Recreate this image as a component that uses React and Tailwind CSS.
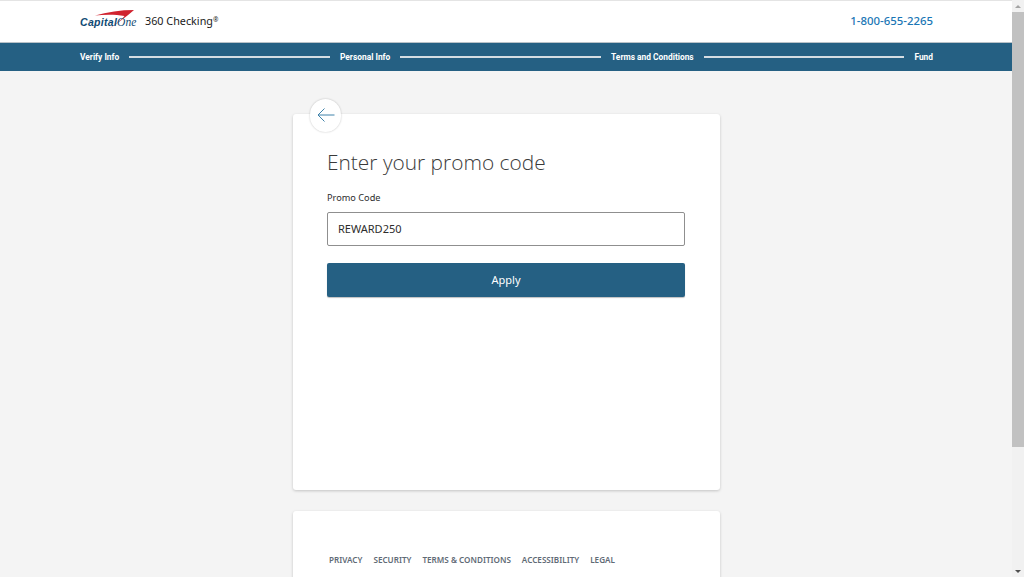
import { Fragment } from "react";

const font = { fontFamily: '"Noto Sans", "Open Sans", sans-serif' };

const steps = ["Verify Info", "Personal Info", "Terms and Conditions", "Fund"];
const footerLinks = ["PRIVACY", "SECURITY", "TERMS & CONDITIONS", "ACCESSIBILITY", "LEGAL"];

function Logo() {
	return (
		<div className="relative w-[56px] h-[22px]">
			<svg className="absolute left-0 top-[-1px]" width="56" height="22" viewBox="0 0 56 22">
				<path d="M15 6.5C27 3 41 1 54 1 47 7 38 14 29 20 36 14.5 42 10.5 44.5 7 36 5.5 25 5.5 15 6.5Z" fill="#d0232f" />
			</svg>
			<span className="absolute left-0 top-[6px] text-[10.5px] leading-[12px] font-bold italic text-[#0f4a73] whitespace-nowrap tracking-[0.3px] font-['Liberation_Sans']">
				Capital<span className="font-normal tracking-normal font-['Liberation_Serif'] text-[11.5px]">One</span>
			</span>
		</div>
	);
}

function ProgressBar() {
	return (
		<div className="h-[28px] shrink-0 bg-[#256083] flex items-center pl-[80px] pr-[79px] text-white text-[8.4px] font-bold font-['Roboto']">
			{steps.map((step, i) => (
				<Fragment key={step}>
					<span className="whitespace-nowrap">{step}</span>
					{i < steps.length - 1 && <div className="flex-1 h-[2px] bg-[#d5dde3] mx-[10px]"></div>}
				</Fragment>
			))}
		</div>
	);
}

function Scrollbar() {
	return (
		<div className="w-[12px] h-full bg-[#f1f1f1] flex flex-col items-center">
			<div className="h-[12px] shrink-0 flex items-center justify-center">
				<div className="w-0 h-0 border-x-[3px] border-x-transparent border-b-[3px] border-b-[#a3a3a3]"></div>
			</div>
			<div className="w-full h-[435px] shrink-0 bg-[#c1c1c1]"></div>
			<div className="flex-1"></div>
			<div className="h-[12px] shrink-0 flex items-center justify-center">
				<div className="w-0 h-0 border-x-[3px] border-x-transparent border-t-[3px] border-t-[#505050]"></div>
			</div>
		</div>
	);
}

export default function App() {
	return (
		<div style={font} className="h-[577px] w-[1024px] flex overflow-hidden bg-[#f4f4f4]">
			<div className="w-[1012px] h-full flex flex-col overflow-hidden">
				{/* Header */}
				<div className="h-[43px] shrink-0 bg-white border-t border-t-[#e4e4e4] border-b border-b-[#b9c2c8] flex items-center justify-between pl-[80px] pr-[79px] pb-[2px]">
					<div className="flex items-center">
						<Logo />
						<span className="ml-[9px] text-[10.8px] leading-[16px] text-[#1a1a1a]">
							360 Checking<sup className="text-[6.5px] leading-none top-[-3px]">®</sup>
						</span>
					</div>
					<span className="text-[11.4px] font-medium text-[#1a76b5]">1-800-655-2265</span>
				</div>
				<ProgressBar />

				{/* Main */}
				<div className="flex flex-col items-center pt-[43px] gap-[21px]">
					<div className="relative w-[427px] h-[376px] shrink-0 bg-white rounded-[3px] shadow-[0_1px_3px_rgba(0,0,0,0.2)] pt-[32px] px-[34.5px]">
						<div className="absolute left-[17.5px] top-[-15px] w-[31px] h-[33px] rounded-full bg-white shadow-[0_0_2px_rgba(0,0,0,0.25)] flex items-center justify-center pb-[2px]">
							<svg width="18" height="14" viewBox="0 0 18 14" fill="none" stroke="#3f82aa" strokeWidth="1">
								<path d="M17.5 7H1M7.5 0.5L1 7l6.5 6.5" />
							</svg>
						</div>
						<h1 className="text-[20.9px] leading-[32px] font-light text-[#3a3a3a] font-['Open_Sans']">Enter your promo code</h1>
						<label className="block mt-[13px] text-[9.2px] leading-[14px] text-[#2d2d2d]">Promo Code</label>
						<div className="mt-[7px] h-[34px] w-[358px] border border-[#8f8f8f] rounded-[2px] flex items-center px-[10px] text-[11px] text-[#2d2d2d]">
							REWARD250
						</div>
						<button className="mt-[17px] h-[34px] w-[358px] bg-[#256083] rounded-[2px] text-white text-[11px] pt-[1px] shadow-[0_1px_1px_rgba(0,0,0,0.25)]">
							Apply
						</button>
					</div>

					<div className="w-[427px] h-[120px] shrink-0 bg-white rounded-[3px] shadow-[0_1px_3px_rgba(0,0,0,0.2)] pt-[43px] pl-[36.5px] flex gap-[11px] text-[8.15px] leading-[12px] font-semibold text-[#5f6b76]">
						{footerLinks.map((link) => (
							<span key={link} className="whitespace-nowrap">{link}</span>
						))}
					</div>
				</div>
			</div>
			<Scrollbar />
		</div>
	);
}
